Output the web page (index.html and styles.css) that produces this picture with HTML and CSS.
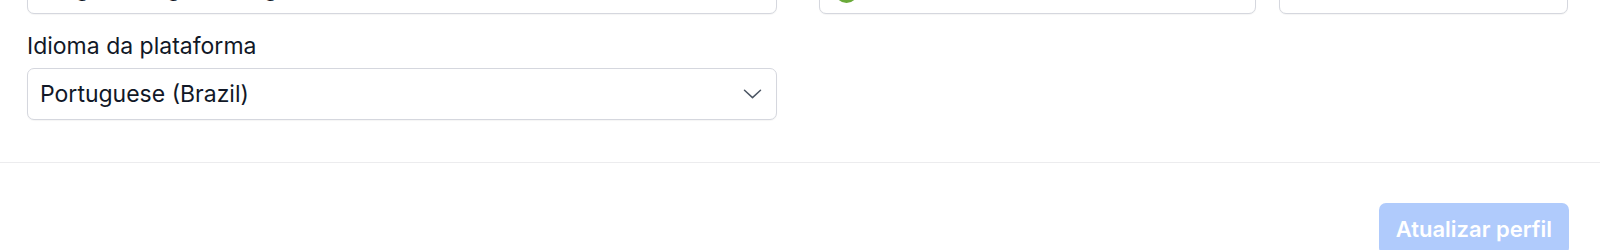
FILE: index.html
```html
<!DOCTYPE html>
<html lang="pt-BR">
<head>
    <meta charset="UTF-8">
    <meta name="viewport" content="width=device-width, initial-scale=1.0">
    <title>Perfil</title>
    <link rel="stylesheet" href="styles.css">
</head>
<body>
<div class="form-body">
    <div class="row row-top">
        <div class="field field-wide">
            <div class="box">
                <span class="box-text">Diego Rodrigues Borges</span>
            </div>
        </div>
        <div class="field field-mid">
            <div class="box">
                <span class="dot"></span>
            </div>
        </div>
        <div class="field field-small">
            <div class="box"></div>
        </div>
    </div>

    <div class="row">
        <div class="field field-wide">
            <label class="lbl" for="langSelect">Idioma da plataforma</label>
            <div class="box select-box" id="langSelect">
                <span class="box-text">Portuguese (Brazil)</span>
                <svg class="chevron" width="19" height="10" viewBox="0 0 19 10" fill="none">
                    <path d="M1.5 1.2 9.5 8.6 17.5 1.2" stroke="#4b5563" stroke-width="1.5" stroke-linecap="round" stroke-linejoin="round"/>
                </svg>
            </div>
        </div>
    </div>
</div>

<div class="form-footer">
    <button class="btn-save" type="submit" disabled>Atualizar perfil</button>
</div>
</body>
</html>
```

FILE: styles.css
```css
html, body {
    overflow: hidden;
}

body {
    margin: 0;
    padding: 0;
    background-color: #ffffff;
    font-family: 'Inter', 'Noto Sans', sans-serif;
    color: #111827;
}

.form-body {
    padding: 0 32px 42px 27px;
    border-bottom: 1px solid #ececee;
}

.row {
    display: flex;
    align-items: flex-start;
}

.row-top {
    margin-top: -38px;
}

.field-wide {
    width: 750px;
}

.field-mid {
    width: 437px;
    margin-left: 42px;
}

.field-small {
    width: 289px;
    margin-left: 23px;
}

.box {
    box-sizing: border-box;
    height: 52px;
    border: 1px solid #d5d7de;
    border-radius: 7px;
    background: #ffffff;
    display: flex;
    align-items: center;
    padding: 0 14px 0 12px;
    box-shadow: 0 1px 1px rgba(0, 0, 0, 0.04);
}

.box-text {
    font-size: 23px;
    color: #111827;
    white-space: nowrap;
}

.dot {
    width: 23px;
    height: 23px;
    border-radius: 50%;
    background-color: #6aaa3a;
    margin-left: 3px;
    align-self: flex-start;
    margin-top: 17px;
}

.lbl {
    display: block;
    font-size: 23px;
    line-height: 28px;
    margin: 18px 0 8px 0;
    color: #111827;
}

.select-box {
    justify-content: space-between;
}

.form-footer {
    display: flex;
    justify-content: flex-end;
    padding: 40px 31px 0 0;
}

.btn-save {
    font-family: 'Inter', 'Noto Sans', sans-serif;
    font-size: 22px;
    font-weight: 600;
    color: #ffffff;
    background-color: #b0cbfc;
    border: none;
    border-radius: 7px;
    padding: 0 17px;
    height: 52px;
    cursor: not-allowed;
}
```
